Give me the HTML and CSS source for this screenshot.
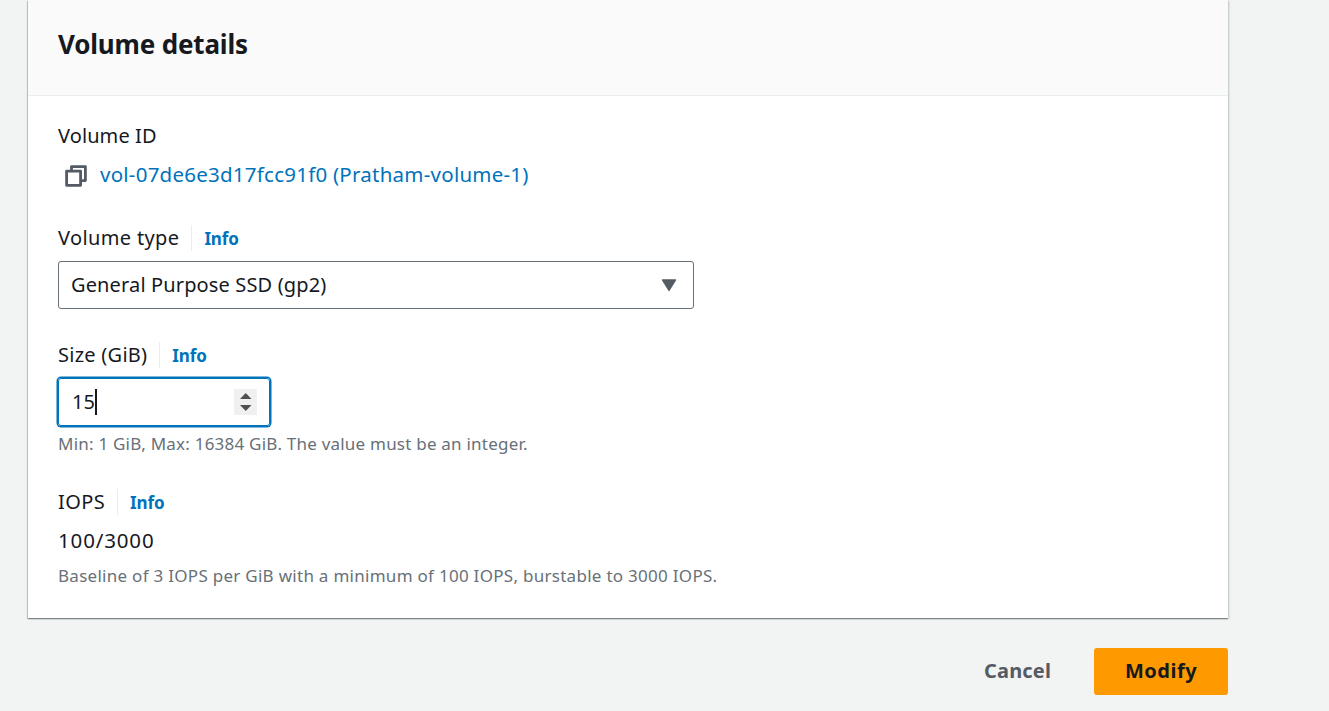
FILE: index.html
```html
<!DOCTYPE html>
<html lang="en">
<head>
<meta charset="utf-8">
<title>Modify volume</title>
<link rel="stylesheet" href="styles.css">
</head>
<body>
<main class="page">
  <section class="card">
    <header class="card-header"><h2 class="title"><span>Volume details</span></h2></header>
    <div class="card-body">
      <div class="field">
        <div class="label-row"><span class="label label-id">Volume ID</span></div>
        <div class="volume-row">
          <svg class="copy-icon" viewBox="0 0 22 22" fill="none" stroke="#545b64" stroke-width="2.8" stroke-linejoin="round"><path d="M1.6 6.1h14v14.2h-14z"/><path d="M6.5 6V1.6h13.9v14H16"/></svg>
          <a class="volume-link">vol-07de6e3d17fcc91f0 (Pratham-volume-1)</a>
        </div>
      </div>
      <div class="field">
        <div class="label-row"><span class="label label-type">Volume type</span><a class="info">Info</a></div>
        <div class="select"><span class="select-text">General Purpose SSD (gp2)</span>
          <svg class="caret-down" viewBox="0 0 16 13"><path d="M1.5 1h13L8 11.5z" fill="#545b64" stroke="#545b64" stroke-width="1.4" stroke-linejoin="round"/></svg>
        </div>
      </div>
      <div class="field">
        <div class="label-row"><span class="label label-size">Size (GiB)</span><a class="info">Info</a></div>
        <div class="number"><span class="number-text">15</span><span class="text-cursor"></span>
          <svg class="spinner" viewBox="0 0 23 26"><path fill="#f0f0f0" d="M0 0h23v26H0z"/><path fill="#505050" d="M6 10h11.5L11.75 4zM6 16h11.5l-5.75 6z"/></svg>
        </div>
        <p class="hint hint-size">Min: 1 GiB, Max: 16384 GiB. The value must be an integer.</p>
      </div>
      <div class="field">
        <div class="label-row"><span class="label label-iops">IOPS</span><a class="info">Info</a></div>
        <p class="value"><span>100/3000</span></p>
        <p class="hint hint-iops">Baseline of 3 IOPS per GiB with a minimum of 100 IOPS, burstable to 3000 IOPS.</p>
      </div>
    </div>
  </section>
  <footer class="actions"><button class="btn btn-link">Cancel</button><button class="btn btn-primary">Modify</button></footer>
</main>
</body>
</html>
```
FILE: styles.css
```css
* { box-sizing: border-box; }
body { margin: 0; height: 711px; overflow: hidden; background: #f2f3f3; color: #16191f; font: 20px/28px "Noto Sans", sans-serif; }
p, h2 { margin: 0; }
.page { width: 1200px; margin-left: 28px; }
.card { height: 618px; background: #fff; box-shadow: 0 1px 1px 0 rgba(0,28,36,.3), 1px 1px 2px 0 rgba(0,28,36,.18), -1px 1px 1px 0 rgba(0,28,36,.18); }
.card-header { height: 96px; padding: 26px 30px 0; background: #fafafa; border-bottom: 1px solid #eaeded; }
.title { font-size: 26px; line-height: 36px; font-weight: 700; letter-spacing: -.17px; }
.card-body { display: flex; flex-direction: column; gap: 32px; padding: 26px 30px 0; }
.field:first-child { height: 70px; }
.label-row { display: flex; align-items: center; height: 28px; }
.label-id { letter-spacing: .1px; }
.label-type { letter-spacing: .36px; }
.label-size { letter-spacing: .26px; }
.label-iops { letter-spacing: .4px; }
.info { height: 26px; margin-left: 12px; padding: 1px 0 0 12px; border-left: 1px solid #eaeded; font-size: 17px; line-height: 26px; font-weight: 700; letter-spacing: -.15px; color: #0073bb; }
.volume-row { display: flex; align-items: center; height: 38px; margin-top: 6px; padding-left: 7px; }
.copy-icon { width: 22px; height: 22px; margin: 2px 13px 0 0; }
.volume-link { margin-bottom: 2px; font-size: 20.5px; letter-spacing: .24px; color: #0073bb; }
.select { display: flex; align-items: center; justify-content: space-between; width: 636px; height: 48px; margin-top: 9px; padding: 0 16px 0 12px; border: 1px solid #687078; border-radius: 3px; }
.select-text { letter-spacing: .14px; }
.caret-down { width: 16px; height: 13px; }
.number { display: flex; align-items: center; width: 212px; height: 48px; margin-top: 9px; padding: 0 12px 0 13px; border: 1px solid #0073bb; border-radius: 3px; box-shadow: 0 0 0 1.5px #0073bb; }
.text-cursor { width: 2px; height: 26px; background: #16191f; }
.spinner { width: 23px; height: 26px; margin-left: auto; }
.hint { margin-top: 6px; font-size: 17px; line-height: 24px; color: #687078; white-space: nowrap; }
.hint-size { letter-spacing: .22px; }
.value { height: 30px; margin-top: 10px; line-height: 28px; font-size: 20.5px; letter-spacing: .85px; }
.hint-iops { margin-top: 8px; letter-spacing: .28px; }
.actions { display: flex; justify-content: flex-end; margin-top: 30px; }
.btn { height: 47px; padding: 0 0 2px; border: 0; border-radius: 3px; background: none; font: 700 20px/28px "Noto Sans", sans-serif; }
.btn-link { margin-right: 43px; letter-spacing: .15px; color: #545b64; }
.btn-primary { width: 134px; background: #ff9900; letter-spacing: .5px; color: #16191f; }
```
